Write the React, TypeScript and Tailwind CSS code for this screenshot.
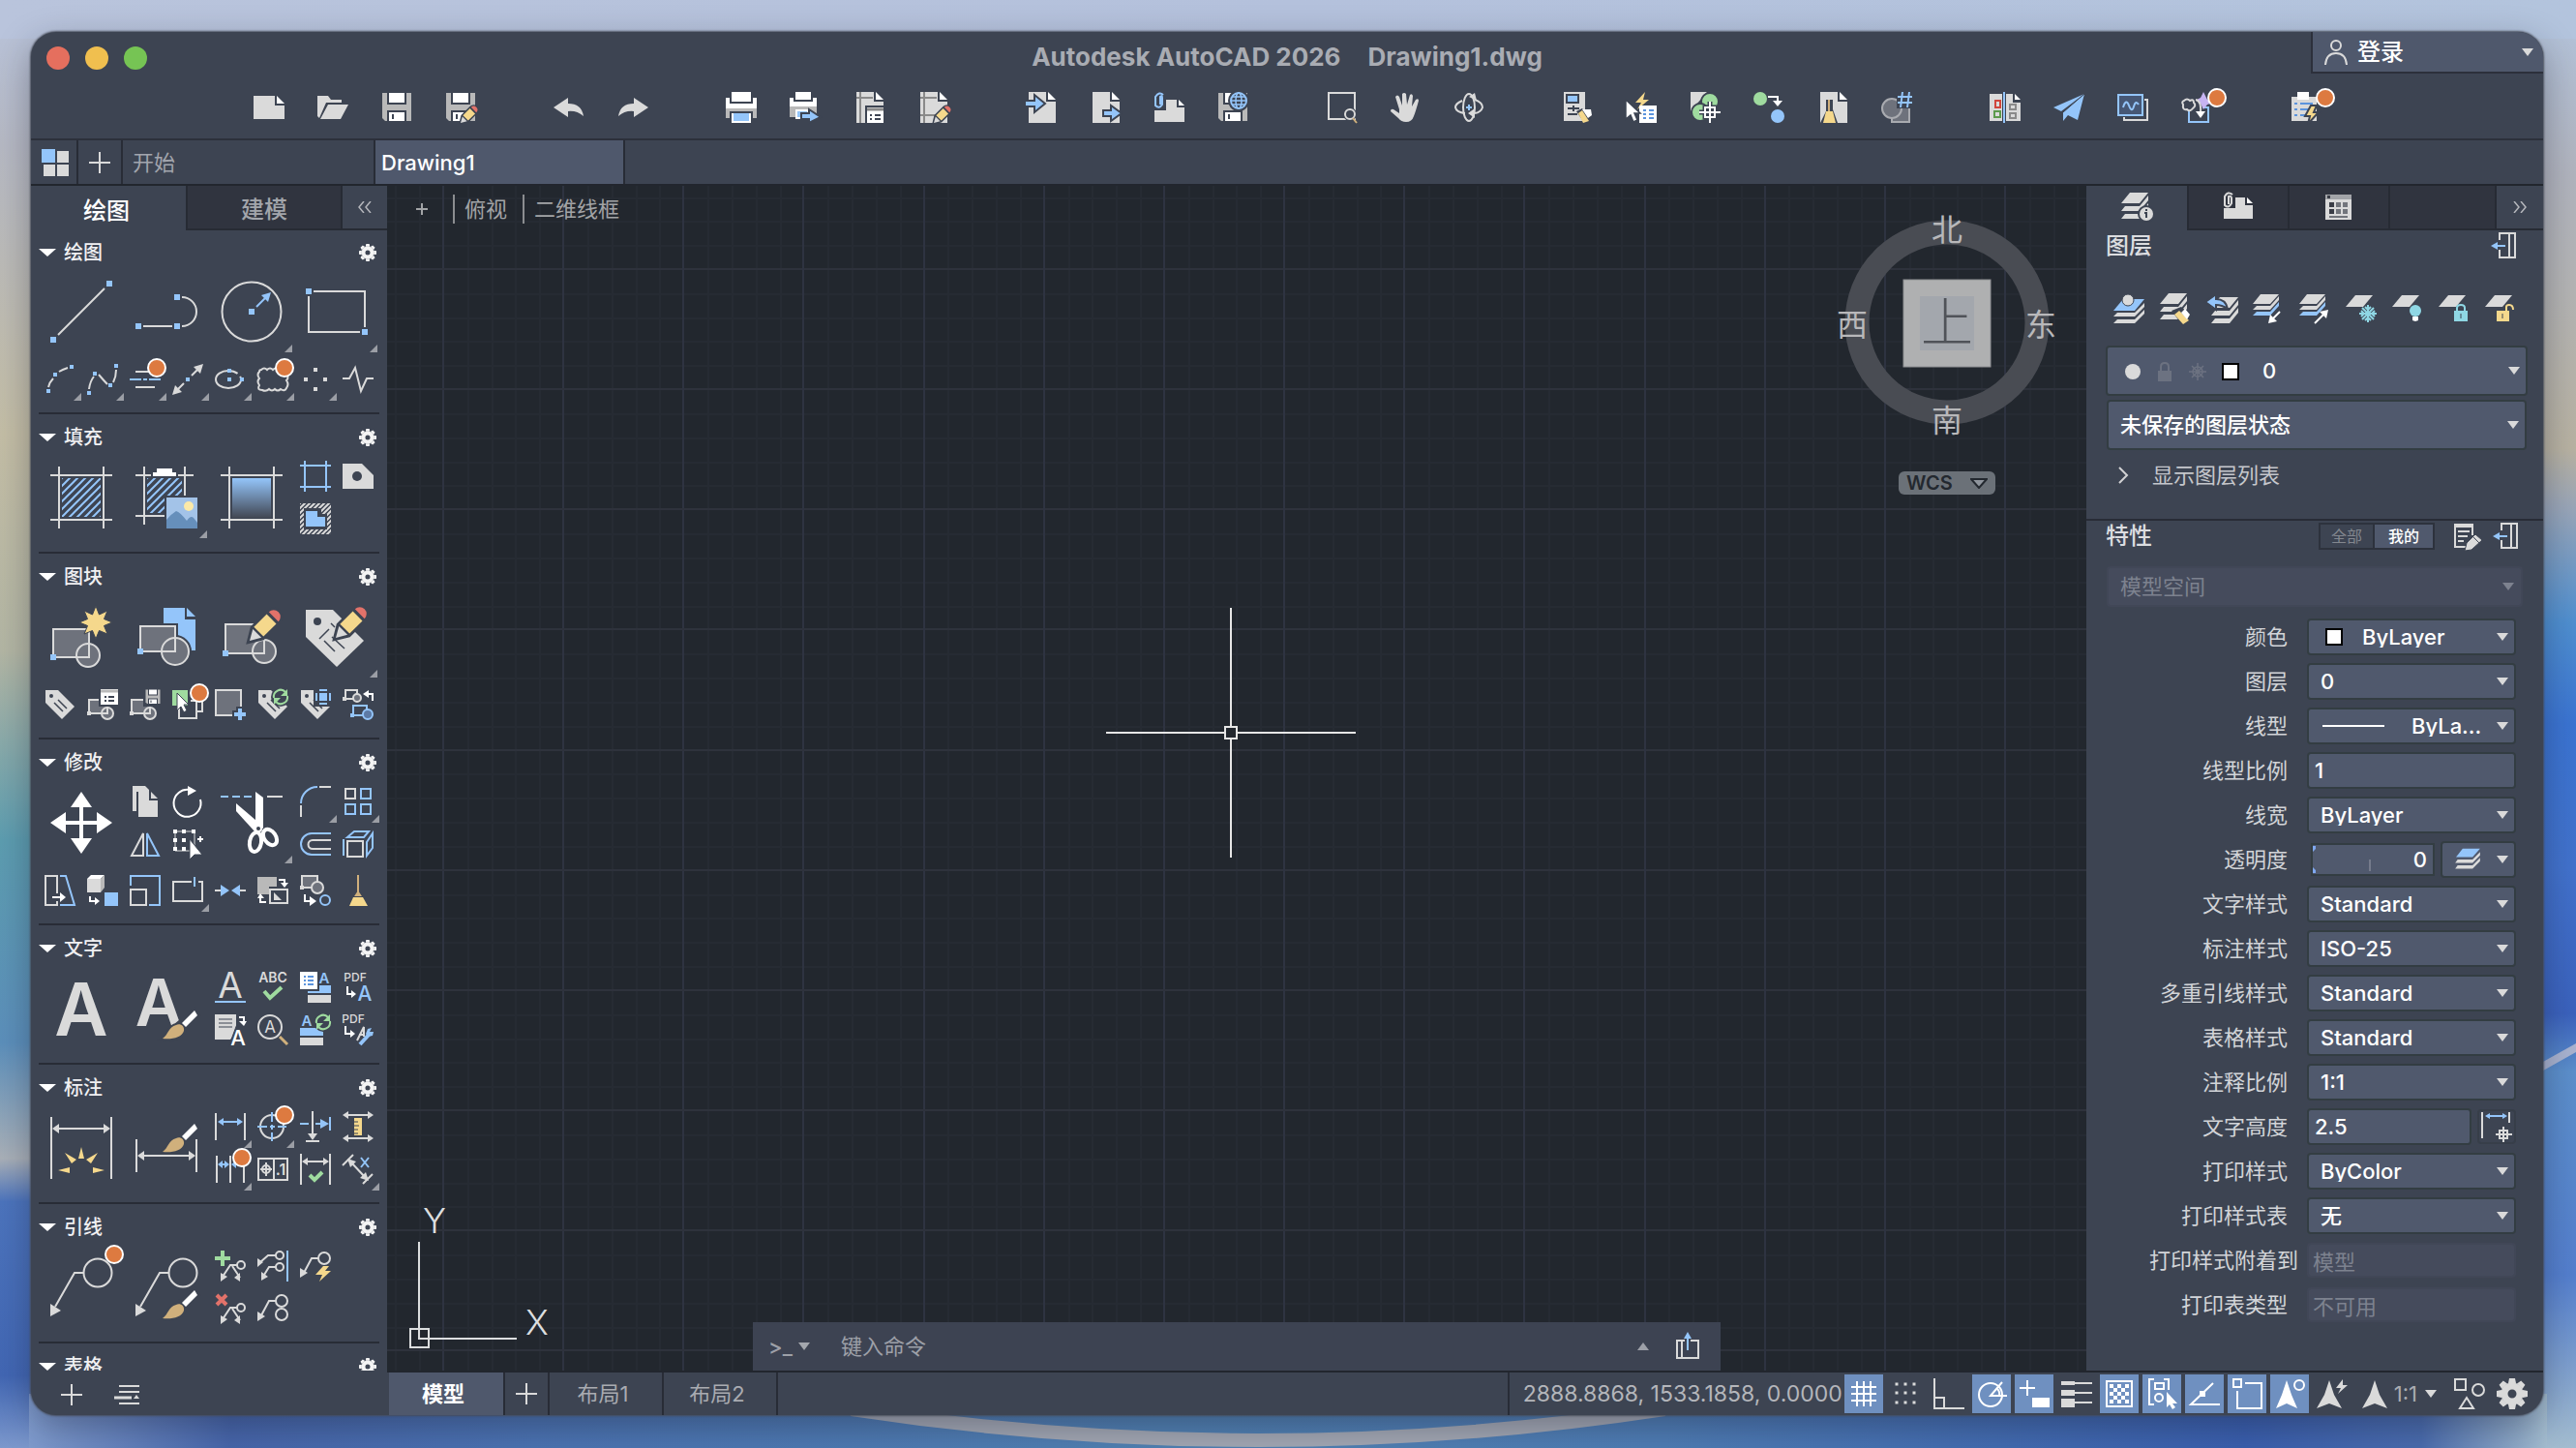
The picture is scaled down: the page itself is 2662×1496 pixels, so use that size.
import type { ReactNode } from 'react'

const G = '#dadada'
const W = '#ffffff'
const B = '#94c5fa'
const Y = '#f5d88c'
const GREEN = '#9fdb9f'
const RED = '#e2726a'
const BG = '#3d4452'
const MID = '#6e727c'
const TAN = '#d0b07c'

function F({ d, c = G }: { d: string; c?: string }) {
  return <path d={d} fill={c} stroke="none" />
}

function S({ d, c = G, w = 2 }: { d: string; c?: string; w?: number }) {
  return <path d={d} fill="none" stroke={c} strokeWidth={w} />
}

function Grips({ at, size = 4, c = B }: { at: number[][]; size?: number; c?: string }) {
  return (
    <>
      {at.map(([x, y]) => (
        <rect key={`${x}-${y}`} x={x - size / 2} y={y - size / 2} width={size} height={size} fill={c} stroke="none" />
      ))}
    </>
  )
}

function Pencil({ x, y, s = 1 }: { x: number; y: number; s?: number }) {
  return (
    <g transform={`translate(${x} ${y}) scale(${s})`}>
      <path d="M0 0L3 -12L18 -27A6 6 0 0 1 27 -18L12 -3Z" fill={BG} stroke={BG} strokeWidth="5" />
      <F d="M0 0L3 -11L11 -3Z" />
      <F d="M4 -13L16 -25L25 -16L13 -4Z" c={Y} />
      <F d="M18 -27A6 6 0 0 1 27 -18Z" c={RED} />
    </g>
  )
}

function Brush({ y = 0 }: { y?: number }) {
  return (
    <g transform={`translate(0 ${y})`}>
      <path d="M28 62C34 58 34 50 42 48L61 32L65 38L51 52C50 60 42 64 28 62Z" fill={BG} stroke={BG} strokeWidth="4" />
      <F d="M28 62C34 58 34 50 42 48C46 46 51 49 50 54C48 61 38 63 28 62Z" c={TAN} />
      <F d="M48 46L61 33L64 38L52 50Z" c={W} />
    </g>
  )
}

function Floppy({ globe }: { globe?: boolean }) {
  return (
    <>
      <F d="M1 1H31V30H4L1 27Z" c="#b9b9b9" />
      <F d="M6 0H26V13H6Z" c={BG} />
      <F d="M8 1H24V11H8Z" c={W} />
      <F d="M6 19H26V31H6Z" c={BG} />
      <F d="M8 21H24V30H8Z" c={W} />
      <F d="M11 23H13V28H11Z" c={BG} />
      {globe && (
        <>
          <circle cx="22" cy="9" r="11" fill={BG} stroke="none" />
          <circle cx="22" cy="9" r="8" stroke={B} />
          <ellipse cx="22" cy="9" rx="3" ry="8" stroke={B} strokeWidth="1.5" />
          <S d="M14 9H30M15 5H29M15 13H29" c={B} w={1.5} />
        </>
      )}
    </>
  )
}

function TinyBlock({ c = G, fill = MID }: { c?: string; fill?: string }) {
  return (
    <>
      <rect x="2" y="11" width="19" height="14" fill={fill} stroke={c} />
      <circle cx="21" cy="25" r="6" fill={fill} stroke={c} />
      <path d="M21 19V25H15" stroke={c} />
      <Grips at={[[2, 25]]} c={c} />
    </>
  )
}

function Tag() {
  return (
    <>
      <F d="M1 1H14L31 18L18 31L1 14Z" />
      <circle cx="7" cy="7" r="2" fill={BG} stroke="none" />
      <S d="M14 11L23 20M10 14L19 23" c={BG} w={1.5} />
    </>
  )
}

function Sync() {
  return (
    <g transform="translate(24 8)">
      <circle r="10" fill={BG} stroke="none" />
      <S d="M-7 1A7 7 0 0 1 5 -5M7 -1A7 7 0 0 1 -5 5" c={GREEN} />
      <F d="M7 -8V-1H0ZM-7 8V1H0Z" c={GREEN} />
    </g>
  )
}

function Hatch({ id, c = B, step = 8 }: { id: string; c?: string; step?: number }) {
  return (
    <defs>
      <pattern id={id} width={step} height={step} patternUnits="userSpaceOnUse">
        <path d={`M0 ${step}L${step} 0M-1 1L1 -1M${step - 1} ${step + 1}L${step + 1} ${step - 1}`} stroke={c} strokeWidth="2" />
      </pattern>
    </defs>
  )
}

function Letter({ x, y, size, c = G, children, weight = 600 }: { x: number; y: number; size: number; c?: string; children: string; weight?: number }) {
  return (
    <text x={x} y={y} fontSize={size} fill={c} stroke="none" textAnchor="middle" fontFamily="Inter, sans-serif" fontWeight={weight}>
      {children}
    </text>
  )
}

const Page = ({ fold = W }: { fold?: string }) => (
  <>
    <F d="M3 0H21V10H31V32H3Z" />
    <F d="M23 0L31 8H23Z" c={fold} />
  </>
)

const SHEETS = 'M9 0H28L19 11H0Z M19 14L28 3V8L19 19H0L4 14Z M19 22L28 11V16L19 27H0L4 22Z'

// 64px tool icons
const large: Record<string, ReactNode> = {
  line: (
    <>
      <S d="M8 56L56 8" />
      <Grips at={[[3, 61], [61, 3]]} size={6} />
    </>
  ),
  polyline: (
    <>
      <S d="M8 47H38M48 17A15 15 0 0 1 48 47" />
      <Grips at={[[3, 47], [43, 47], [43, 17]]} size={6} />
    </>
  ),
  circle: (
    <>
      <circle cx="32" cy="32" r="30.5" />
      <S d="M37 27L47 17" c={B} />
      <F d="M52 12L42 15L49 22Z" c={B} />
      <Grips at={[[32, 32]]} size={6} />
    </>
  ),
  rect: (
    <>
      <S d="M8 11H61V48M56 53H3V16" />
      <Grips at={[[3, 11], [61, 53]]} size={6} />
    </>
  ),
  hatch: (
    <>
      <Hatch id="hatch-a" />
      <S d="M9 0V64M55 0V64M0 9H64M0 55H64" />
      <rect x="12" y="12" width="40" height="40" fill="url(#hatch-a)" stroke="none" />
    </>
  ),
  hatchImage: (
    <>
      <Hatch id="hatch-b" />
      <S d="M9 0V60M51 0V30M0 9H16M44 9H60M0 51H30" />
      <path d="M12 12H48V30H30V48H12Z" fill="url(#hatch-b)" stroke="none" />
      <F d="M18 10V6H22V2H38V6H42V10Z" c={W} />
      <F d="M32 32H64V64H32Z" c="#a3c3e8" />
      <circle cx="55" cy="41" r="5" fill="#fbe9a8" stroke="none" />
      <F d="M32 55Q37 49 42 46Q46 47 53 56Q57 50 60 53L64 58V64H32Z" c="#668fbb" />
    </>
  ),
  gradient: (
    <>
      <defs>
        <linearGradient id="fade" x1="0" y1="0" x2="0" y2="1">
          <stop offset="0" stopColor={B} />
          <stop offset="1" stopColor="#424753" />
        </linearGradient>
      </defs>
      <S d="M9 0V64M55 0V64M0 9H64M0 55H64" />
      <rect x="12" y="12" width="40" height="41" fill="url(#fade)" stroke="none" />
    </>
  ),
  blockNew: (
    <>
      <rect x="3" y="24" width="37" height="29" fill={MID} />
      <circle cx="39" cy="51" r="12" fill={MID} />
      <path d="M40 39V53H27" />
      <Grips at={[[3, 53]]} size={6} />
      <path
        d="M47 0L50.5 9L59 5L55.5 13.500L64 17L55.500 20.500L59 29L50.500 25.500L47 34L43.500 25.500L35 29L38.500 20.500L30 17L38.500 13.500L35 5L43.500 9Z"
        fill={Y}
        stroke={BG}
        strokeWidth="1"
      />
    </>
  ),
  blockInsert: (
    <>
      <F d="M29 2H51V14H62V46H29Z" c={B} />
      <F d="M53 2L62 11H53Z" c={B} />
      <rect x="5" y="21" width="36" height="26" fill={MID} stroke={BG} strokeWidth="6" />
      <circle cx="41" cy="47" r="14" fill={MID} stroke={BG} strokeWidth="6" />
      <rect x="5" y="21" width="36" height="26" fill={MID} />
      <circle cx="41" cy="47" r="14" fill={MID} />
      <path d="M41 33V47H27" />
      <Grips at={[[5, 47]]} size={6} />
    </>
  ),
  blockEdit: (
    <>
      <rect x="5" y="19" width="40" height="30" fill={MID} />
      <circle cx="45" cy="47" r="12" fill={MID} />
      <path d="M45 35V49H33" />
      <Grips at={[[5, 49]]} size={6} />
      <Pencil x={30} y={36} s={1.1} />
    </>
  ),
  tagEdit: (
    <>
      <F d="M0 4H28L60 36L32 63L0 32Z" />
      <circle cx="12" cy="16" r="4" fill={BG} stroke="none" />
      <S d="M14 34L24 24M19 36L30 47M27 32L40 44M26 18L30 22" c={BG} w={1.5} />
      <Pencil x={31} y={33} s={1.1} />
    </>
  ),
  move: (
    <>
      <S d="M32 10V54M10 32H54" c={W} w={4} />
      <F d="M32 0L43 16H21ZM32 64L43 48H21ZM0 32L16 21V43ZM64 32L48 21V43Z" c={W} />
    </>
  ),
  trim: (
    <>
      <S d="M0 5H8M12 5H20M24 5H32" c={B} />
      <S d="M48 5H64" />
      <F d="M36 0L44 6V38L36 34Z" c={W} />
      <F d="M16 12L44 36L36 42L16 20Z" c={W} />
      <circle cx="39" cy="38" r="4" fill={W} stroke="none" />
      <circle cx="39" cy="38" r="2" fill={BG} stroke="none" />
      <ellipse cx="36" cy="52" rx="6" ry="10" stroke={W} strokeWidth="4" transform="rotate(10 36 52)" />
      <ellipse cx="51" cy="47" rx="6" ry="9" stroke={W} strokeWidth="4" transform="rotate(-35 51 47)" />
    </>
  ),
  text: <Letter x={32} y={60} size={76}>A</Letter>,
  textStyle: (
    <>
      <Letter x={24} y={50} size={67}>A</Letter>
      <Brush y={1} />
    </>
  ),
  dim: (
    <>
      <S d="M1 0V64M63 0V64M8 12H56" />
      <F d="M2 12L9 7V17ZM62 12L55 7V17Z" />
      <F d="M32 31L35 43H29ZM15 37L27 44L22 48ZM49 37L37 44L42 48ZM8 55L20 52V58ZM56 55L44 52V58Z" c={Y} />
    </>
  ),
  dimStyle: (
    <>
      <S d="M1 23V57M63 23V57M8 40H56" />
      <F d="M2 40L9 35V45ZM62 40L55 35V45Z" />
      <Brush y={-26} />
    </>
  ),
  leader: (
    <>
      <circle cx="49" cy="17" r="14.500" />
      <S d="M34 17H25L5 52" />
      <F d="M0 62V49L11 56Z" />
    </>
  ),
  leaderStyle: (
    <>
      <circle cx="49" cy="17" r="14.500" />
      <S d="M34 17H25L5 52" />
      <F d="M0 62V49L11 56Z" />
      <Brush y={2} />
    </>
  ),
}

// 32px icons
const small: Record<string, ReactNode> = {
  newFile: (
    <>
      <F d="M0 4H22V14H32V28H0Z" />
      <F d="M24 4L32 12H24Z" c={W} />
    </>
  ),
  open: <F d="M0 4H11L14 8H25V11H9L2 27L0 25ZM11 13H32L24 28H3Z" />,
  save: <Floppy />,
  saveAs: (
    <>
      <Floppy />
      <Pencil x={16} y={32} s={0.6} />
    </>
  ),
  undo: <F d="M0 16L15 6V12Q29 12 31 25Q24 19 15 20V26Z" />,
  redo: <F d="M32 16L17 6V12Q3 12 1 25Q8 19 17 20V26Z" />,
  print: (
    <>
      <F d="M6 0H26V10H6Z" c={W} />
      <F d="M0 6H4V12H28V6H32V18H0Z" c={W} />
      <F d="M0 17H32V27H0Z" c="#b9b9b9" />
      <F d="M4 20H28V32H4Z" c={BG} />
      <F d="M6 22H26V32H6Z" c={W} />
      <F d="M8 22H24V30H8Z" c={B} />
    </>
  ),
  printOut: (
    <>
      <F d="M6 0H22V8H6Z" c={W} />
      <F d="M0 6H4V10H24V6H28V16H0Z" c={W} />
      <F d="M0 15H28V26H0Z" c="#b9b9b9" />
      <F d="M6 18H22V28H6Z" c={W} />
      <F d="M8 20H18V26H8Z" c={B} />
      <path d="M12 22H20V18L32 26L20 32V28H12Z" fill={B} stroke={BG} />
    </>
  ),
  plotSettings: (
    <>
      <Page />
      <S d="M3 6H20M7 0V32" c="#8a8a8a" />
      <F d="M12 14H32V32H12Z" c={BG} />
      <F d="M14 16H31V32H14Z" c={W} />
      <S d="M17 24H19M22 24H28M17 28H19M22 28H28" c={BG} />
      <S d="M14 18H31" c="#8a8a8a" w={3} />
    </>
  ),
  plotEdit: (
    <>
      <Page />
      <S d="M3 6H20M7 0V32M3 24H24" c="#8a8a8a" />
      <Pencil x={17} y={32} s={0.6} />
    </>
  ),
  importFile: (
    <>
      <Page />
      <path d="M-1 9H9V3L20 12L9 21V15H-1Z" fill={B} stroke={BG} />
    </>
  ),
  exportFile: (
    <>
      <Page />
      <path d="M14 19H22V14L33 22L22 30V25H14Z" fill={B} stroke={BG} />
    </>
  ),
  attach: (
    <>
      <F d="M1 8H24V16H32V31H1Z" />
      <F d="M26 8L32 14H26Z" c={W} />
      <F d="M0 0H13V19H0Z" c={BG} />
      <S d="M7 13V5Q9 3 9 6V13Q6 18 2 14V5Q6 -1 10 3" c={B} />
    </>
  ),
  saveWeb: <Floppy globe />,
  zoomWindow: (
    <>
      <rect x="3" y="1" width="27" height="27" />
      <circle cx="25" cy="23" r="7" fill={BG} stroke="none" />
      <circle cx="25" cy="23" r="5" />
      <S d="M28 27L32 32" c={TAN} />
    </>
  ),
  pan: (
    <F d="M10 18L6 5Q8 2 10 5L13 14L13 2Q15 0 17 2L18 13L21 3Q23 1 24 4L23 15L27 8Q30 6 30 9Q27 20 25 25Q23 31 17 31Q12 31 9 27L1 20Q1 17 4 18L10 22Z" />
  ),
  orbit: (
    <>
      <ellipse cx="16" cy="16" rx="6" ry="14" />
      <S d="M9 9Q2 12 2 16Q3 21 12 22M22 8Q30 11 30 16Q28 22 20 22" />
      <F d="M22 17V27L15 22ZM16 5L22 1L24 9Z" />
      <S d="M16 13V19M13 16H19" c={B} />
    </>
  ),
  calcBrush: (
    <>
      <F d="M2 0H24V30H2Z" />
      <F d="M4 2H18V12H4Z" c={BG} />
      <F d="M6 4H16V10H6Z" c={B} />
      <S d="M6 17H18M12 14V20M6 23H16" c={BG} />
      <F d="M15 20L21 17L31 30L24 33Z" c={BG} />
      <F d="M17 22L21 19L28 30L22 32Z" c={Y} />
      <F d="M21 18L30 18L31 24L27 27Z" c={W} />
    </>
  ),
  quickSelect: (
    <>
      <F d="M20 0L10 11H16L12 18L24 8H18Z" c={Y} />
      <F d="M14 14H32V32H14Z" c={W} />
      <S d="M18 19H21M24 19H29M18 23H21M24 23H29M18 27H21M24 27H29" c="#5c94dd" />
      <path d="M0 8V28L5 24L8 31L12 29L9 22H15Z" fill={W} stroke={BG} strokeWidth="1.5" />
    </>
  ),
  match: (
    <>
      <F d="M1 0H18L1 20Z" />
      <circle cx="21" cy="10" r="9" fill={GREEN} stroke={BG} />
      <circle cx="11" cy="21" r="9" fill={GREEN} stroke={BG} />
      <S d="M21 10V32M10 21H32M16 16H26V26H16Z" c={BG} w={5} />
      <S d="M21 10V32M10 21H32M16 16H26V26H16Z" c={W} />
    </>
  ),
  convert: (
    <>
      <circle cx="7" cy="7" r="7" fill={GREEN} stroke="none" />
      <S d="M15 5H25V9" c={W} />
      <F d="M20 9H30L25 15Z" c={W} />
      <circle cx="25" cy="25" r="7" fill={B} stroke="none" />
    </>
  ),
  purge: (
    <>
      <Page />
      <F d="M9 8H16V18L21 32H3L9 20Z" c={BG} />
      <S d="M12 8V20" c={TAN} />
      <F d="M9 20H16L19 32H6Z" c={Y} />
    </>
  ),
  count: (
    <>
      <rect x="11" y="16" width="18" height="15" fill={MID} stroke="#a9abb0" />
      <circle cx="11" cy="17" r="10" fill={MID} stroke="#a9abb0" />
      <F d="M16 0H33V17H16Z" c={BG} />
      <S d="M22 0L20 16M29 0L27 16M17 5H32M17 11H32" c={B} />
    </>
  ),
  compare: (
    <>
      <F d="M0 2H13V30H0Z" />
      <F d="M17 2H24V11H32V30H17Z" />
      <F d="M26 2L32 8H26Z" c={W} />
      <S d="M6 9H11V16H6Z" c="#d0453c" />
      <S d="M5 20H11V26H5Z" c="#5c9a4c" />
      <S d="M21 13H27V18H21ZM21 22H27V27H21Z" c="#8a8a8a" />
      <S d="M15 0V32" c={B} />
    </>
  ),
  send: (
    <>
      <F d="M32 2L0 16L8 20Z" c={B} />
      <F d="M32 2L10 21V30L15 24L25 29Z" c={B} />
      <S d="M32 2L10 21" c={BG} w={1} />
    </>
  ),
  trace: (
    <>
      <S d="M28 8H31V29H7V26" />
      <rect x="1" y="3" width="25" height="21" stroke={B} fill="#465775" />
      <S d="M6 16Q9 6 12 14T17 15T22 13" c={B} />
    </>
  ),
  assist: (
    <>
      <S d="M8 17V31H28V16H22" c={B} />
      <F d="M23 0L27 8L33 11L27 13L23 18L20 12L16 8L20 6Z" c="#c7b4f2" />
      <path d="M2 13Q0 10 3 9Q6 6 9 9Q13 7 13 11Q16 14 12 17Q9 21 6 18Q1 19 2 13Z" fill={BG} />
      <S d="M15 8Q21 9 20 22" />
      <F d="M15 20H25L20 27Z" c={W} />
    </>
  ),
  clipboard: (
    <>
      <F d="M2 5H28V30H2Z" />
      <F d="M8 0H20V8H8Z" c={W} />
      <S d="M5 12H8M11 12H24M5 18H8M11 18H20M5 24H8M11 24H16" c="#5c94dd" />
      <path d="M22 14L16 25H21L19 33L30 21H25L28 14Z" fill={Y} stroke={BG} />
    </>
  ),
  arc: (
    <>
      <S d="M24 4Q18 6 15 8M9 15Q5 19 4 24" />
      <Grips at={[[28, 3], [11, 11], [4, 28]]} />
    </>
  ),
  spline: (
    <>
      <S d="M2 26Q3 18 7 13M12 11Q18 18 21 21M27 19Q30 13 30 6" />
      <Grips at={[[2, 30], [8, 10], [24, 22], [30, 2]]} />
    </>
  ),
  multiline: (
    <>
      <S d="M6 8H20M6 24H26" />
      <S d="M0 16H12M14 16H18M20 16H32" c={B} />
    </>
  ),
  ray: (
    <>
      <S d="M5 27L12 20M20 12L27 5" />
      <F d="M32 0L22 3L29 10ZM0 32L3 22L10 29Z" />
      <Grips at={[[16, 16]]} />
    </>
  ),
  ellipse: (
    <>
      <ellipse cx="14" cy="16" rx="13" ry="9" strokeDasharray="62 4" />
      <Grips at={[[15, 7], [15, 16], [28, 16]]} />
    </>
  ),
  cloud: (
    <path d="M4 6Q7 3 10 6Q13 3 16 6Q19 3 22 6Q25 3 28 6Q32 7 30 11Q33 14 30 17Q33 21 30 25Q28 29 24 26Q21 29 18 26Q15 29 12 26Q9 29 5 27Q-1 27 2 22Q-1 18 2 15Q-1 11 2 8Q2 6 4 6Z" />
  ),
  points: <Grips at={[[16, 6], [6, 16], [26, 16], [16, 26]]} c={G} />,
  breakLine: <S d="M0 15H7L13 4L19 28L25 15H32" />,
  boundary: <S d="M5 0V32M27 0V32M0 5H32M0 27H32" c={B} />,
  wipeout: (
    <>
      <F d="M0 3H20L32 15V29H0Z" />
      <circle cx="15" cy="16" r="5" fill={BG} stroke="none" />
    </>
  ),
  region: (
    <>
      <Hatch id="hatch-c" c={G} step={5} />
      <rect width="32" height="32" fill="url(#hatch-c)" stroke="none" />
      <F d="M4 5H22V11H28V27H4Z" c={BG} />
      <F d="M6 8H18V14H26V24H6Z" c={B} />
    </>
  ),
  tag: <Tag />,
  blockAttr: (
    <>
      <TinyBlock />
      <F d="M12 -2H34V18H12Z" c={BG} />
      <F d="M14 0H32V16H14Z" c={W} />
      <S d="M14 2H32" c="#b9b9b9" w={3} />
      <S d="M18 8H20M22 8H28M18 12H20M22 12H28" c={BG} />
    </>
  ),
  blockSave: (
    <>
      <TinyBlock />
      <F d="M14 -2H34V18H14Z" c={BG} />
      <g transform="translate(16 0) scale(.5)">
        <Floppy />
      </g>
    </>
  ),
  blockDynamic: (
    <>
      <S d="M26 12H31V23H26" />
      <path d="M7 14V30H25V12H19" />
      <F d="M0 1H16V17H0Z" c={GREEN} />
      <path d="M5 4V22L9 18L12 24L15 22L12 16H17Z" fill={W} stroke={BG} strokeWidth="1" />
    </>
  ),
  rectAdd: (
    <>
      <rect x="1" y="1" width="26" height="26" fill={MID} />
      <S d="M26 18V34M18 26H34" c={BG} w={8} />
      <S d="M26 20V32M20 26H32" c={B} w={4} />
    </>
  ),
  tagSync: (
    <>
      <Tag />
      <Sync />
    </>
  ),
  tagSelect: (
    <>
      <Tag />
      <F d="M14 -2H34V18H14Z" c={BG} />
      <F d="M20 4H28V12H20ZM20 0H28V2H20ZM20 14H28V16H20ZM16 4H18V12H16ZM30 4H32V12H30Z" c={B} />
    </>
  ),
  blockReplace: (
    <>
      <rect x="3" y="1" width="12" height="9" />
      <circle cx="15" cy="9" r="4" fill={MID} />
      <Grips at={[[2, 10]]} c={G} />
      <S d="M31 12V5H25" c={W} />
      <F d="M21 5L27 1V9Z" c={W} />
      <rect x="11" y="17" width="14" height="10" stroke={B} />
      <circle cx="26" cy="26" r="5" fill="#5d7aa5" stroke={B} />
      <Grips at={[[10, 27]]} />
    </>
  ),
  copy: (
    <>
      <F d="M3 0H16L20 4V6H7V26H3Z" />
      <F d="M9 6H20V15H29V32H9Z" />
      <F d="M22 6L29 13H22Z" />
    </>
  ),
  rotate: (
    <>
      <S d="M18 4A14 14 0 1 0 29 14" c={W} />
      <F d="M16 0L25 5L16 10Z" c={W} />
    </>
  ),
  mirror: (
    <>
      <path d="M2 28H14V5Z" />
      <path d="M18 5V28H30Z" stroke={B} />
    </>
  ),
  gripEdit: (
    <>
      <S d="M3 3H23V23H3Z" w={1} />
      <Grips at={[[3, 3], [12, 3], [22, 3], [3, 12], [12, 12], [3, 21], [12, 21]]} c={W} />
      <S d="M29 8V14M26 11H32" c={W} />
      <path d="M18 11V32L23 27H31Z" fill={W} stroke={BG} strokeWidth="1" />
    </>
  ),
  fillet: (
    <>
      <S d="M1 18A17 17 0 0 1 18 1" c={B} />
      <S d="M20 1H32M1 20V32" />
    </>
  ),
  array: (
    <>
      <rect x="3" y="3" width="10" height="10" />
      <S d="M19 3H29V13H19ZM3 19H13V29H3ZM19 19H29V29H19Z" c={B} />
    </>
  ),
  offset: (
    <>
      <S d="M32 5H12A11 11 0 0 0 12 27H32" c={B} />
      <S d="M32 12H13A4 4 0 0 0 13 21H32" />
    </>
  ),
  solid: (
    <>
      <rect x="5" y="13" width="16" height="16" />
      <S d="M1 11V28M5 9L12 3H27L22 9ZM25 14L31 5V20L25 28Z" c={B} />
    </>
  ),
  stretch: (
    <>
      <S d="M13 19V1H1V31H13V27" />
      <S d="M16 1H22L31 31H16" c={B} />
      <S d="M8 23H17" c={W} />
      <F d="M16 18L22 23L16 28Z" c={W} />
    </>
  ),
  cubeCopy: (
    <>
      <F d="M0 4L4 0H18L14 4Z" c={W} />
      <F d="M0 4H14V18H0Z" />
      <F d="M14 4L18 0V13L14 18Z" c="#b9b9b9" />
      <F d="M18 18H32V32H18Z" c={B} />
      <S d="M3 22V27H8" c={W} />
      <F d="M8 23L13 27L8 31Z" c={W} />
    </>
  ),
  scale: (
    <>
      <S d="M1 11V1H31V31H20" c={B} />
      <rect x="1" y="15" width="16" height="16" />
    </>
  ),
  breakAt: (
    <>
      <S d="M20 7H1V27H31V7H27" />
      <S d="M23 2V12" c={B} />
    </>
  ),
  join: (
    <>
      <S d="M0 16H8M24 16H32" />
      <F d="M6 10L15 16L6 22ZM26 10L17 16L26 22Z" c={B} />
    </>
  ),
  overlap: (
    <>
      <F d="M0 2H20V12H12V20H0Z" c="#b9b9b9" />
      <rect x="13" y="15" width="18" height="14" />
      <F d="M17 18L25 26H17Z" />
      <S d="M22 5H28V9M3 23V28H9" c={W} />
      <F d="M24 8H32L28 13ZM0 24H7L3 19Z" c={W} />
    </>
  ),
  blockCopy: (
    <>
      <rect x="2" y="1" width="16" height="12" fill={MID} />
      <circle cx="18" cy="13" r="6" fill={MID} />
      <Grips at={[[2, 13]]} c={G} />
      <circle cx="26" cy="26" r="5" stroke={B} />
      <S d="M5 20V27H12" c={W} />
      <F d="M10 22L17 27L10 32Z" c={W} />
    </>
  ),
  broom: (
    <>
      <S d="M16 0V18" c={TAN} />
      <F d="M16 16L20 22H12Z" c={TAN} />
      <F d="M11 23H21L26 32H7Z" c={Y} />
    </>
  ),
  textSingle: (
    <>
      <Letter x={16} y={27} size={37} weight={400}>A</Letter>
      <S d="M0 31H32" c={B} />
    </>
  ),
  spell: (
    <>
      <Letter x={16} y={11} size={14}>ABC</Letter>
      <S d="M7 20L13 27L25 16" c={GREEN} w={4} />
    </>
  ),
  textField: (
    <>
      <F d="M0 0H18V18H0Z" c={W} />
      <S d="M4 5H6M8 5H14M4 9H6M8 9H14M4 13H6M8 13H14" c="#5c94dd" />
      <Letter x={25} y={12} size={15} c={B}>A</Letter>
      <F d="M20 14H32V22H8V20H20Z" c={B} />
      <F d="M8 24H32V32H8Z" />
    </>
  ),
  pdfText: (
    <>
      <Letter x={13} y={10} size={12} weight={500}>PDF</Letter>
      <S d="M5 15V23H9" c={W} />
      <F d="M9 19L14 23L9 27Z" c={W} />
      <Letter x={23} y={30} size={21} c={B} weight={500}>A</Letter>
    </>
  ),
  textConvert: (
    <>
      <F d="M0 0H22V20L16 26H0Z" />
      <S d="M4 5H18M4 9H18M4 13H18" c={BG} w={1} />
      <S d="M25 3H30V8" c={W} />
      <F d="M25 7H33L30 12Z" c={W} />
      <path d="M14 34L23 10L32 34Z" fill={BG} stroke={BG} strokeWidth="1" />
      <Letter x={24} y={32} size={22} c={W} weight={500}>A</Letter>
    </>
  ),
  findText: (
    <>
      <circle cx="13" cy="13" r="12" />
      <Letter x={13} y={19} size={17} weight={400}>A</Letter>
      <S d="M23 23L31 31" c={TAN} w={3} />
    </>
  ),
  textUpdate: (
    <>
      <Letter x={7} y={12} size={15} c={B}>A</Letter>
      <F d="M0 14H20L24 18V22H0Z" c={B} />
      <F d="M0 24H24V32H0Z" />
      <Sync />
    </>
  ),
  pdfSettings: (
    <>
      <Letter x={11} y={9} size={12} weight={500}>PDF</Letter>
      <S d="M3 12V20H8" c={W} />
      <F d="M8 16L13 20L8 24Z" c={W} />
      <S d="M15 27L22 13V23M17 21H22" />
      <S d="M18 31L28 20" c={B} w={4} />
      <F d="M24 20L26 15L30 14L28 18L32 18L31 22L26 23Z" c={B} />
    </>
  ),
  dimLinear: (
    <>
      <S d="M1 2V30M31 2V30" />
      <S d="M6 11H26" c={B} />
      <F d="M3 11L9 7V15ZM29 11L23 7V15Z" c={B} />
    </>
  ),
  centerMark: (
    <>
      <circle cx="15" cy="16" r="12" />
      <S d="M15 1V11M15 14V19M15 22V31M0 16H10M13 16H18M21 16H30" c={B} />
    </>
  ),
  ordinate: (
    <>
      <S d="M13 0V23M6 31H20" />
      <F d="M8 23H18L13 30Z" />
      <S d="M0 13H9M16 13H22M31 6V20" c={B} />
      <F d="M21 8L30 13L21 18Z" c={B} />
    </>
  ),
  dimSpace: (
    <>
      <S d="M4 4H28M4 28H28" />
      <F d="M0 4L6 0V8ZM32 4L26 0V8ZM0 28L6 24V32ZM32 28L26 24V32Z" />
      <F d="M12 7H20V25H12Z" c={Y} />
      <S d="M12 11H16M12 15H17M12 19H16M12 23H16" c={BG} w={1} />
    </>
  ),
  dimContinue: (
    <>
      <S d="M2 2V30M16 2V30M30 10V30" />
      <S d="M6 11H12M19 11H24" c={B} />
      <F d="M3 11L8 7V15ZM15 11L10 7V15ZM17 11L22 7V15Z" c={B} />
    </>
  ),
  tolerance: (
    <>
      <rect x="1" y="5" width="30" height="22" />
      <S d="M17 5V27M3 16H15M9 9V23" />
      <circle cx="9" cy="16" r="4" />
      <Letter x={24} y={22} size={16}>.1</Letter>
    </>
  ),
  dimInspect: (
    <>
      <S d="M1 0V32M31 0V32M6 8H26" />
      <F d="M2 8L8 4V12ZM30 8L24 4V12Z" />
      <S d="M10 22L15 27L23 19" c={GREEN} w={4} />
    </>
  ),
  dimAligned: (
    <>
      <S d="M0 12L11 1M21 31L31 21M9 9L23 24" />
      <F d="M5 5L14 8L8 14ZM27 28L18 25L24 19Z" />
      <S d="M19 4L27 14M27 4L19 14" c={B} />
    </>
  ),
  leaderAdd: (
    <>
      <S d="M8 0V16M0 8H16" c={GREEN} w={4} />
      <circle cx="27" cy="15" r="4" />
      <S d="M23 15H16L8 27M18 16L26 28" />
      <F d="M6 32V23L13 27ZM26 32V23L20 28Z" />
    </>
  ),
  leaderAlign: (
    <>
      <circle cx="23" cy="5" r="4" />
      <circle cx="23" cy="17" r="4" />
      <S d="M19 5H11L3 12M19 17H12L7 25" />
      <F d="M0 17V8L6 12ZM4 31V22L11 27Z" />
      <S d="M31 0V32" c={B} />
    </>
  ),
  leaderQuick: (
    <>
      <circle cx="25" cy="8" r="6" />
      <S d="M19 8H12L4 23" />
      <F d="M0 28V18L8 23Z" />
      <F d="M24 16L16 25H23L20 32L32 21H26L30 16Z" c={Y} />
    </>
  ),
  leaderRemove: (
    <>
      <S d="M2 2L12 12M12 2L2 12" c={RED} w={4} />
      <circle cx="27" cy="15" r="4" />
      <S d="M23 15H16L8 27M18 16L26 28" />
      <F d="M6 32V23L13 27ZM26 32V23L20 28Z" />
    </>
  ),
  leaderCollect: (
    <>
      <circle cx="25" cy="8" r="6" />
      <circle cx="25" cy="22" r="6" />
      <S d="M19 8H12L4 23" />
      <F d="M0 29V19L8 24Z" />
    </>
  ),
  layersInfo: (
    <>
      <F d={SHEETS} />
      <circle cx="26" cy="22" r="9" fill={BG} stroke="none" />
      <circle cx="26" cy="22" r="7" fill={G} stroke="none" />
      <S d="M24 21H26V26M26 17V19" c={BG} />
    </>
  ),
  clip: (
    <>
      <F d="M1 6H23V14H31V28H1Z" />
      <F d="M25 6L31 12H25Z" c={W} />
      <F d="M-1 0H13V17H-1Z" c="#30343f" />
      <F d="M1 18H13V24H1Z" />
      <S d="M6 13V5Q9 4 9 7V12Q6 18 2 14V5Q5 -1 10 3" />
    </>
  ),
  calcPanel: (
    <>
      <F d="M2 3H29V29H2Z" />
      <F d="M2 3H29V8H2Z" c="#a2a4a8" />
      <F d="M4 4H7V7H4ZM6 11H11V16H6ZM6 18H11V23H6Z" c="#3a3d46" />
      <F d="M13 11H18V16H13ZM20 11H25V16H20ZM13 18H18V23H13ZM20 18H25V23H20ZM6 25H25V27H6Z" c="#72757c" />
    </>
  ),
  dock: (
    <>
      <S d="M9 10V3H25V28H9V20M19 3V28" />
      <S d="M5 16H15" c={B} />
      <F d="M0 16L7 12V20Z" c={B} />
    </>
  ),
  layerWalk: (
    <>
      <F d="M10 6H32L22 18H0Z" c={B} />
      <circle cx="15" cy="7" r="6" fill={G} stroke={BG} strokeWidth="1" />
      <F d="M2 24H0L4 20H22L32 10V14L22 24ZM0 31L4 27H22L32 17V21L22 31Z" />
    </>
  ),
  layerMatch: (
    <>
      <F d={SHEETS} />
      <F d="M12 18L22 14L34 24L24 34Z" c={BG} />
      <F d="M15 22L20 18L30 28L24 32Z" c={Y} />
      <F d="M22 20L26 16L31 22L28 27Z" c={W} />
    </>
  ),
  layerPrev: (
    <>
      <g transform="translate(5 4)">
        <F d={SHEETS} />
      </g>
      <path d="M-1 9L10 1V6Q20 6 22 16Q16 12 10 12V17Z" fill={B} stroke={BG} />
    </>
  ),
  layerIso: (
    <>
      <F d="M8 1H27L18 11H0Z M18 13L27 3V7L18 17H0L4 13Z" />
      <F d="M18 19L27 9V13L18 23H0L4 19Z" c={B} />
      <S d="M28 19L20 27" c={W} />
      <F d="M16 31L18 22L25 29Z" c={W} />
    </>
  ),
  layerUniso: (
    <>
      <F d="M8 1H27L18 11H0Z M18 13L27 3V7L18 17H0L4 13Z" />
      <F d="M18 19L27 9V13L18 23H0L4 19Z" c={B} />
      <S d="M16 31L25 22" c={W} />
      <F d="M30 17L28 26L21 19Z" c={W} />
    </>
  ),
  layerFreeze: (
    <>
      <F d="M10 2H28L18 14H0Z" />
      <S d="M23 12V30M14 21H32M17 15L29 27M29 15L17 27M20 14L23 17L26 14M20 28L23 25L26 28M16 18L19 21L16 24M30 18L27 21L30 24" c="#8fd7e4" />
    </>
  ),
  layerOff: (
    <>
      <F d="M10 2H28L18 14H0Z" />
      <circle cx="24" cy="18" r="6" fill="#8fd7e4" stroke="none" />
      <F d="M21 24H27V28L24 29L21 28Z" c={W} />
    </>
  ),
  layerLock: (
    <>
      <F d="M10 2H28L18 14H0Z" />
      <S d="M19 19V15Q19 12 23 12Q27 12 27 15V19" c="#8fd7e4" />
      <F d="M16 18H30V29H16Z" c="#8fd7e4" />
      <S d="M23 21V26" c={BG} w={1} />
    </>
  ),
  layerUnlock: (
    <>
      <F d="M10 2H28L18 14H0Z" />
      <S d="M22 19V14Q22 12 25 12Q29 12 29 17" c={Y} />
      <F d="M12 18H25V29H12Z" c={Y} />
      <S d="M18 21V26" c={BG} w={1} />
    </>
  ),
  noteEdit: (
    <>
      <F d="M2 3H22V7H2Z" />
      <S d="M14 27H3V5H21V15M6 11H18M6 16H16M6 21H12" />
      <path d="M13 31L15 23L24 14L31 20L20 30Z" fill={G} stroke={BG} strokeWidth="1" />
      <S d="M21 16L28 23" c={BG} w={1} />
    </>
  ),
  pickHeight: (
    <>
      <S d="M1 1V28M29 1V12" />
      <S d="M6 5H24" c={B} />
      <F d="M4 5L9 2V8ZM27 5L22 2V8Z" c={B} />
      <S d="M23 16V32M15 24H32M19 20H27V28H19Z" />
    </>
  ),
  share: (
    <>
      <S d="M13 10H5V28H27V10H19M10 10V28" />
      <S d="M16 6V20" c={B} />
      <F d="M16 1L20 8H12Z" c={B} />
    </>
  ),
  menuList: (
    <>
      <S d="M6 7H27M6 13H27M6 25H27" />
      <S d="M1 19H19" w={3} />
      <F d="M21 20L24 16L27 20Z" />
    </>
  ),
  grid: <S d="M9 3V29M16 3V29M23 3V29M3 9H29M3 16H29M3 23H29" c={W} />,
  snap: (
    <Grips at={[[6, 6], [15, 6], [24, 6], [6, 15], [15, 15], [24, 15], [6, 25], [15, 25], [24, 25]]} size={3} c={G} />
  ),
  ortho: <S d="M1 0V31H32M1 20H11V31" />,
  polar: (
    <>
      <circle cx="15" cy="17" r="12" stroke={W} />
      <S d="M27 4L15 18H32" c={W} />
      <S d="M22 11Q25 14 24 18" c={W} />
    </>
  ),
  dynInput: (
    <>
      <S d="M9 2V18M1 10H17" c={W} />
      <F d="M14 20H32V30H14Z" c={W} />
    </>
  ),
  lineweight: (
    <>
      <S d="M0 5H32M12 15H32M12 25H32" />
      <F d="M0 3H14V7H0ZM0 12H14V18H0ZM0 21H14V30H0Z" />
    </>
  ),
  transparency: (
    <>
      <rect x="3" y="3" width="26" height="26" stroke={W} />
      <Grips
        at={[[8, 8], [16, 8], [24, 8], [12, 12], [20, 12], [8, 16], [16, 16], [24, 16], [12, 20], [20, 20], [8, 24], [16, 24], [24, 24]]}
        c={W}
      />
    </>
  ),
  cycle: (
    <>
      <S d="M8 1H3V27H8M18 1H23V12" c={W} />
      <rect x="9" y="5" width="9" height="6" stroke={W} />
      <circle cx="13" cy="20" r="4" stroke={W} />
      <F d="M21 14V30L24 27L27 32L30 30L27 26H32Z" c={W} />
    </>
  ),
  osnapTrack: (
    <>
      <S d="M25 5L2 27H32" c={W} />
      <Grips at={[[14, 16]]} size={6} c={W} />
    </>
  ),
  osnap: (
    <>
      <rect x="2" y="1" width="8" height="8" stroke={W} />
      <S d="M14 5H31V31H6V13" c={W} />
    </>
  ),
  annoVisible: (
    <>
      <F d="M13 2L18 17L24 31L13 26L2 31L8 17Z" c={W} />
      <circle cx="26" cy="7" r="5" stroke={W} />
    </>
  ),
  annoAuto: (
    <>
      <F d="M13 2L18 17L26 31L13 26L0 31L8 17Z" />
      <F d="M27 1L20 10H25L22 16L32 7H27Z" />
    </>
  ),
  annoScale: <F d="M16 2L21 17L29 31L16 26L3 31L11 17Z" />,
  shapes: (
    <>
      <rect x="1" y="1" width="11" height="11" />
      <circle cx="25" cy="12" r="6" />
      <path d="M13 20L20 31H6Z" />
    </>
  ),
}

function Icon({ name, big }: { name: string; big?: boolean }) {
  return (
    <svg
      viewBox={big ? '0 0 64 64' : '0 0 32 32'}
      className={big ? 'size-16 overflow-visible' : 'size-8 overflow-visible'}
      fill="none"
      stroke={G}
      strokeWidth="2"
      aria-hidden="true"
    >
      {big ? large[name] : small[name]}
    </svg>
  )
}

function Gear({ className }: { className: string }) {
  return (
    <svg viewBox="0 0 32 32" className={className} aria-hidden="true">
      <circle cx="16" cy="16" r="8" fill="none" stroke="currentColor" strokeWidth="7" />
      {[0, 45, 90, 135].map((a) => (
        <path key={a} d="M13 0H19L20 5H12ZM13 32H19L20 27H12Z" fill="currentColor" transform={`rotate(${a} 16 16)`} />
      ))}
    </svg>
  )
}

function Caret({ className = 'h-2 w-3 text-[#dadada]' }: { className?: string }) {
  return (
    <svg viewBox="0 0 12 8" className={className} preserveAspectRatio="none" aria-hidden="true">
      <path d="M0 0H12L6 8Z" fill="currentColor" />
    </svg>
  )
}

function Plus() {
  return (
    <svg viewBox="0 0 22 22" className="size-[22px]" aria-hidden="true">
      <path d="M11 0V22M0 11H22" stroke={G} strokeWidth="2" />
    </svg>
  )
}

const Badge = ({ className }: { className: string }) => (
  <span className={`absolute size-5 rounded-full border-2 border-white bg-[#dd7a40] ${className}`} />
)

type Tool = { icon: string; label: string; big?: boolean; fly?: boolean; badge?: boolean }

const t = (icon: string, label: string, flags = ''): Tool => ({
  icon,
  label,
  big: flags.includes('L'),
  fly: flags.includes('f'),
  badge: flags.includes('n'),
})

type Section = { title: string; rows: Tool[][] }

const sections: Section[] = [
  {
    title: '绘图',
    rows: [
      [t('line', '直线', 'L'), t('polyline', '多段线', 'L'), t('circle', '圆', 'Lf'), t('rect', '矩形', 'Lf')],
      [
        t('arc', '圆弧', 'f'),
        t('spline', '样条曲线', 'f'),
        t('multiline', '多线', 'fn'),
        t('ray', '构造线', 'f'),
        t('ellipse', '椭圆', 'f'),
        t('cloud', '修订云线', 'fn'),
        t('points', '点', 'f'),
        t('breakLine', '折断线'),
      ],
    ],
  },
  {
    title: '填充',
    rows: [
      [
        t('hatch', '图案填充', 'L'),
        t('hatchImage', '图像填充', 'Lf'),
        t('gradient', '渐变色', 'L'),
        t('boundary', '边界'),
        t('wipeout', '区域覆盖'),
        t('region', '面域'),
      ],
    ],
  },
  {
    title: '图块',
    rows: [
      [t('blockNew', '创建块', 'L'), t('blockInsert', '插入块', 'L'), t('blockEdit', '编辑块', 'L'), t('tagEdit', '编辑属性', 'Lf')],
      [
        t('tag', '定义属性'),
        t('blockAttr', '块属性管理器'),
        t('blockSave', '写块'),
        t('blockDynamic', '动态块', 'n'),
        t('rectAdd', '添加'),
        t('tagSync', '同步属性'),
        t('tagSelect', '选择属性'),
        t('blockReplace', '替换块'),
      ],
    ],
  },
  {
    title: '修改',
    rows: [
      [
        t('move', '移动', 'L'),
        t('copy', '复制'),
        t('rotate', '旋转'),
        t('trim', '修剪', 'Lf'),
        t('fillet', '圆角', 'f'),
        t('array', '阵列', 'f'),
        t('mirror', '镜像'),
        t('gripEdit', '夹点编辑'),
        t('offset', '偏移'),
        t('solid', '三维'),
      ],
      [
        t('stretch', '拉伸'),
        t('cubeCopy', '复制实体'),
        t('scale', '缩放'),
        t('breakAt', '打断', 'f'),
        t('join', '合并'),
        t('overlap', '绘图次序'),
        t('blockCopy', '复制块'),
        t('broom', '清理'),
      ],
    ],
  },
  {
    title: '文字',
    rows: [
      [
        t('text', '多行文字', 'L'),
        t('textStyle', '文字样式', 'L'),
        t('textSingle', '单行文字'),
        t('spell', '拼写检查'),
        t('textField', '字段'),
        t('pdfText', 'PDF 文字'),
        t('textConvert', '转换文字'),
        t('findText', '查找'),
        t('textUpdate', '更新字段'),
        t('pdfSettings', 'PDF 识别设置'),
      ],
    ],
  },
  {
    title: '标注',
    rows: [
      [
        t('dim', '标注', 'L'),
        t('dimStyle', '标注样式', 'L'),
        t('dimLinear', '线性', 'f'),
        t('centerMark', '圆心标记', 'fn'),
        t('ordinate', '坐标'),
        t('dimSpace', '调整间距'),
        t('dimContinue', '连续', 'fn'),
        t('tolerance', '公差'),
        t('dimInspect', '检验'),
        t('dimAligned', '对齐', 'f'),
      ],
    ],
  },
  {
    title: '引线',
    rows: [
      [
        t('leader', '多重引线', 'Ln'),
        t('leaderStyle', '多重引线样式', 'L'),
        t('leaderAdd', '添加引线'),
        t('leaderAlign', '对齐引线'),
        t('leaderQuick', '快速引线'),
        { icon: '', label: '' },
        t('leaderRemove', '删除引线'),
        t('leaderCollect', '合并引线'),
      ],
    ],
  },
  { title: '表格', rows: [] },
]

const toolbar: Tool[][] = [
  [t('newFile', '新建'), t('open', '打开'), t('save', '保存'), t('saveAs', '另存为')],
  [t('undo', '放弃'), t('redo', '重做')],
  [t('print', '打印'), t('printOut', '发布'), t('plotSettings', '页面设置'), t('plotEdit', '打印样式')],
  [t('importFile', '输入'), t('exportFile', '输出'), t('attach', '附着'), t('saveWeb', '保存到云')],
  [t('zoomWindow', '窗口缩放'), t('pan', '平移'), t('orbit', '动态观察')],
  [
    t('calcBrush', '特性匹配'),
    t('quickSelect', '快速选择'),
    t('match', '选择类似对象'),
    t('convert', '转换'),
    t('purge', '清理'),
    t('count', '计数'),
  ],
  [t('compare', '比较'), t('send', '共享'), t('trace', '跟踪'), t('assist', '助手', 'n')],
  [t('clipboard', '活动见解', 'n')],
]

const layerTools = [
  ['layerWalk', '图层漫游'],
  ['layerMatch', '匹配图层'],
  ['layerPrev', '上一个'],
  ['layerIso', '隔离'],
  ['layerUniso', '取消隔离'],
  ['layerFreeze', '冻结'],
  ['layerOff', '关闭'],
  ['layerLock', '锁定'],
  ['layerUnlock', '解锁'],
]

const statusTools: [string, string, boolean][] = [
  ['grid', '栅格', true],
  ['snap', '捕捉', false],
  ['ortho', '正交', false],
  ['polar', '极轴追踪', true],
  ['dynInput', '动态输入', true],
  ['lineweight', '线宽', false],
  ['transparency', '透明度', true],
  ['cycle', '选择循环', true],
  ['osnapTrack', '对象捕捉追踪', true],
  ['osnap', '对象捕捉', true],
  ['annoVisible', '注释可见性', true],
  ['annoAuto', '自动缩放', false],
]

type Prop = { label: string; value: string; kind?: 'input' | 'disabled' | 'color' | 'linetype' | 'alpha' | 'height' }

const props: Prop[] = [
  { label: '颜色', value: 'ByLayer', kind: 'color' },
  { label: '图层', value: '0' },
  { label: '线型', value: 'ByLa...', kind: 'linetype' },
  { label: '线型比例', value: '1', kind: 'input' },
  { label: '线宽', value: 'ByLayer' },
  { label: '透明度', value: '0', kind: 'alpha' },
  { label: '文字样式', value: 'Standard' },
  { label: '标注样式', value: 'ISO-25' },
  { label: '多重引线样式', value: 'Standard' },
  { label: '表格样式', value: 'Standard' },
  { label: '注释比例', value: '1:1' },
  { label: '文字高度', value: '2.5', kind: 'height' },
  { label: '打印样式', value: 'ByColor' },
  { label: '打印样式表', value: '无' },
  { label: '打印样式附着到', value: '模型', kind: 'disabled' },
  { label: '打印表类型', value: '不可用', kind: 'disabled' },
]

function Wallpaper() {
  return (
    <svg className="absolute inset-0 h-full w-full" viewBox="0 0 2662 1496" preserveAspectRatio="none" aria-hidden="true">
      <defs>
        <linearGradient id="wall-left" x1="0" y1="0" x2="0" y2="1">
          <stop offset="0" stopColor="#b9c4dc" />
          <stop offset=".1" stopColor="#b6b9c4" />
          <stop offset=".3" stopColor="#c4bea6" />
          <stop offset=".45" stopColor="#b3b6a4" />
          <stop offset=".58" stopColor="#5d9db0" />
          <stop offset=".72" stopColor="#5c8fbb" />
          <stop offset=".8" stopColor="#a9b0b8" />
          <stop offset=".83" stopColor="#4c74bd" />
          <stop offset=".95" stopColor="#4267b4" />
          <stop offset="1" stopColor="#7c98cc" />
        </linearGradient>
        <linearGradient id="wall-right" x1="0" y1="0" x2="0" y2="1">
          <stop offset="0" stopColor="#b3c4dd" />
          <stop offset=".12" stopColor="#b1b4be" />
          <stop offset=".2" stopColor="#b4b4b4" />
          <stop offset=".31" stopColor="#b8b2a2" />
          <stop offset=".35" stopColor="#9aa6b8" />
          <stop offset=".43" stopColor="#4f8fd0" />
          <stop offset=".5" stopColor="#3b74d2" />
          <stop offset=".6" stopColor="#4272cc" />
          <stop offset=".7" stopColor="#3b62bd" />
          <stop offset=".74" stopColor="#5c8fcb" />
          <stop offset=".88" stopColor="#547fce" />
          <stop offset="1" stopColor="#a3bccf" />
        </linearGradient>
        <linearGradient id="wall-bottom">
          <stop offset="0" stopColor="#7f9bcd" />
          <stop offset=".08" stopColor="#4766ab" />
          <stop offset=".2" stopColor="#4b73b2" />
          <stop offset=".45" stopColor="#5181b3" />
          <stop offset=".65" stopColor="#4f7db5" />
          <stop offset=".88" stopColor="#3a5fae" />
          <stop offset=".95" stopColor="#4a6cae" />
          <stop offset="1" stopColor="#a3bccf" />
        </linearGradient>
        <linearGradient id="wall-top">
          <stop offset="0" stopColor="#b9c4dc" />
          <stop offset=".5" stopColor="#b4c1dc" />
          <stop offset="1" stopColor="#b3c4dd" />
        </linearGradient>
      </defs>
      <rect width="1331" height="1496" fill="url(#wall-left)" />
      <rect x="1331" width="1331" height="1496" fill="url(#wall-right)" />
      <rect width="2662" height="40" fill="url(#wall-top)" />
      <rect x="30" y="1440" width="2602" height="56" fill="url(#wall-bottom)" />
      <path d="M880 1456Q1300 1520 1720 1456" fill="none" stroke="#a3a8b4" strokeWidth="14" />
      <path d="M2620 1106L2670 1078" stroke="#a9b3d0" strokeWidth="8" />
    </svg>
  )
}

function ToolButton({ tool }: { tool: Tool }) {
  if (!tool.icon) return <span />
  return (
    <button
      type="button"
      aria-label={tool.label}
      className={`relative flex items-center justify-center ${tool.big ? 'col-span-2 row-span-2' : ''}`}
    >
      <Icon name={tool.icon} big={tool.big} />
      {tool.fly && (
        <svg viewBox="0 0 8 8" className={`absolute size-2 ${tool.big ? 'right-0.5 bottom-0.5' : 'right-0 bottom-0'}`}>
          <path d="M8 0V8H0Z" fill="#9b9ea5" />
        </svg>
      )}
      {tool.badge && <Badge className="top-0 right-0" />}
    </button>
  )
}

function ToolPanel() {
  return (
    <aside className="flex w-[368px] shrink-0 flex-col">
      <div role="tablist" className="flex h-[46px] shrink-0 text-2xl leading-none">
        <button role="tab" aria-selected="true" className="w-[160px] pt-1.5 pr-1 font-medium text-white">
          绘图
        </button>
        <button role="tab" className="flex-1 border-x-2 border-b-2 border-[#272b34] bg-[#30343f] pt-1.5 font-medium text-[#a2a5ab]">
          建模
        </button>
        <button aria-label="收起" className="flex w-[46px] items-center justify-center border-b-2 border-[#272b34]">
          <svg viewBox="0 0 14 12" className="h-3 w-3.5" fill="none" stroke="#b4b6bb" strokeWidth="1.5">
            <path d="M6 0L1 6L6 12M13 0L8 6L13 12" />
          </svg>
        </button>
      </div>
      <div className="flex min-h-0 flex-1 flex-col overflow-hidden px-2">
        {sections.map((s, n) => (
          <section key={s.title} className="shrink-0 border-b-2 border-[#282c36]">
            <header className={`flex items-center pt-1.5 ${n === 0 ? 'h-10' : 'h-[42px]'}`}>
              <button type="button" className="flex flex-1 items-center gap-2 text-xl leading-none font-medium text-[#f0f0f2]">
                <Caret className="h-2 w-[18px] text-white" />
                {s.title}
              </button>
              <button type="button" aria-label={`${s.title}设置`} className="mr-[3px] text-[#f4f4f4]">
                <Gear className="size-[18px]" />
              </button>
            </header>
            <div className="flex flex-col gap-1 pb-3">
              {s.rows.map((row, i) => (
                <div key={i} className="grid auto-rows-[44px] grid-cols-8">
                  {row.map((tool, j) => (
                    <ToolButton key={tool.icon || j} tool={tool} />
                  ))}
                </div>
              ))}
            </div>
          </section>
        ))}
      </div>
      <div className="flex h-[46px] shrink-0 items-center gap-8 pt-1 pl-[31px]">
        <button type="button" aria-label="添加面板">
          <Plus />
        </button>
        <button type="button" aria-label="面板列表">
          <Icon name="menuList" />
        </button>
      </div>
    </aside>
  )
}

const STEP = 24.83

function Grid() {
  const vs = Array.from({ length: 140 }, (_, i) => i)
  const pos = (offset: number, i: number) => Math.round(offset + (i - 5) * STEP)
  return (
    <svg className="absolute inset-0 h-full w-full" shapeRendering="crispEdges" aria-hidden="true">
      {vs.map((i) => (
        <g key={i}>
          {i % 5 !== 0 && (
            <>
              <rect x={pos(58, i)} width="2" height="100%" fill="#262b33" />
              <rect y={pos(86, i)} width="100%" height="2" fill="#262b33" />
            </>
          )}
        </g>
      ))}
      {vs.filter((i) => i % 5 === 0).map((i) => (
        <g key={i}>
          <rect x={pos(57, i)} width="2" height="100%" fill="#2e3341" />
          <rect y={pos(85, i)} width="100%" height="2" fill="#2e323c" />
        </g>
      ))}
    </svg>
  )
}

function ViewCube() {
  return (
    <div className="absolute top-5 right-6 flex w-[240px] flex-col items-center gap-[33px]">
      <svg viewBox="0 0 240 242" className="h-[242px] w-[240px]" fontFamily="'Noto Sans CJK SC', sans-serif">
        <circle cx="120" cy="121" r="93" fill="none" stroke="#494c53" strokeWidth="25" />
        <g fill="#b8b8ba" fontSize="32" textAnchor="middle">
          <text x="120" y="37">北</text>
          <text x="120" y="234">南</text>
          <text x="22" y="135">西</text>
          <text x="217" y="135">东</text>
        </g>
        <rect x="75" y="77" width="90" height="90" fill="#afb0b1" stroke="#8f9194" />
        <rect x="92" y="94" width="56" height="56" fill="#a3a7ad" />
        <text x="120" y="141" fontSize="54" fontWeight="300" fill="#505359" textAnchor="middle">上</text>
      </svg>
      <button
        type="button"
        className="flex h-6 w-[100px] items-center justify-between rounded-md bg-[#6b7178] px-2 text-xl leading-none font-semibold text-[#23282f]"
      >
        WCS
        <svg viewBox="0 0 18 11" className="h-[11px] w-[18px]" fill="#8f959d" stroke="#23282f" strokeWidth="2">
          <path d="M1 1H17L9 10Z" />
        </svg>
      </button>
    </div>
  )
}

function Canvas() {
  return (
    <main className="relative flex min-w-0 flex-1 flex-col justify-between overflow-hidden bg-[#22272e]">
      <Grid />
      <nav className="relative flex h-12 items-center pl-7 text-[22px] leading-none text-[#a2a4a6]">
        <button type="button" aria-label="视口">
          <svg viewBox="0 0 16 16" className="size-4" stroke="currentColor" strokeWidth="2">
            <path d="M8 2V14M2 8H14" />
          </svg>
        </button>
        <button type="button" className="ml-6 flex h-[30px] items-center border-l-2 border-[#8b8d90] pl-2.5">
          俯视
        </button>
        <button type="button" className="ml-4 flex h-[30px] items-center border-l-2 border-[#8b8d90] pl-2.5">
          二维线框
        </button>
      </nav>

      {/* cursor */}
      <svg viewBox="0 0 258 258" className="absolute top-[436px] left-[743px] size-[258px]" stroke="#e6e6e6" strokeWidth="2" fill="none">
        <path d="M129 0V122M129 136V258M0 129H122M136 129H258" />
        <rect x="123" y="123" width="12" height="12" />
      </svg>

      {/* UCS icon */}
      <svg viewBox="0 0 160 160" className="absolute bottom-4 left-5 size-40" stroke="#dcdedf" strokeWidth="2" fill="none">
        <path d="M13 43V143H114M4 133H23V152H4Z" />
        <g fill="#dcdedf" stroke="none" fontFamily="Inter, sans-serif" fontWeight="300" fontSize="36" textAnchor="middle">
          <text x="29" y="34">Y</text>
          <text x="135" y="139">X</text>
        </g>
      </svg>

      <ViewCube />

      <form
        className="relative mx-auto flex h-[50px] w-[1000px] max-w-full items-center bg-[#3d4352] pr-[18px] pl-4 text-[22px] text-[#9da0a8]"
        onSubmit={(e) => e.preventDefault()}
      >
        <button type="button" aria-label="最近的命令" className="flex items-center gap-1.5 font-medium">
          &gt;_
          <Caret className="h-2 w-3 text-[#a4a7ad]" />
        </button>
        <input
          aria-label="命令"
          placeholder="键入命令"
          className="ml-8 min-w-0 flex-1 bg-transparent placeholder:text-[#9da0a8]"
        />
        <button type="button" aria-label="历史记录" className="mr-6">
          <Caret className="h-2 w-3 rotate-180 text-[#9da0a8]" />
        </button>
        <button type="button" aria-label="输入设置">
          <Icon name="share" />
        </button>
      </form>
    </main>
  )
}

const field = 'rounded-sm border-2 border-[#333d42] bg-[#50596d] text-white'

function Select({ id, label, value, className, pad = 'pl-3' }: { id?: string; label?: string; value: string; className: string; pad?: string }) {
  return (
    <div className="relative min-w-0 flex-1">
      <select id={id} aria-label={label} className={`w-full appearance-none ${pad} ${className}`}>
        <option>{value}</option>
      </select>
      <Caret className="pointer-events-none absolute top-1/2 right-2 -mt-1 h-2 w-3 text-[#dadada]" />
    </div>
  )
}

function PropertyRow({ prop, id }: { prop: Prop; id: string }) {
  const { kind, label, value } = prop
  return (
    <div className="flex h-[46px] items-center gap-5">
      <label htmlFor={id} className="w-[143px] text-right whitespace-nowrap text-[#d2d4d8]">
        {label}
      </label>
      <div className="relative flex w-[216px] items-center gap-1.5">
        {(!kind || kind === 'color' || kind === 'linetype') && (
          <Select
            id={id}
            value={value}
            className={`h-[38px] font-medium ${field}`}
            pad={kind === 'color' ? 'pl-[55px]' : kind === 'linetype' ? 'pl-[106px]' : 'pl-3'}
          />
        )}
        {kind === 'color' && <span className="pointer-events-none absolute left-[19px] size-[18px] border-2 border-black bg-white" />}
        {kind === 'linetype' && <span className="pointer-events-none absolute left-4 h-0.5 w-16 bg-white" />}
        {(kind === 'input' || kind === 'height') && (
          <input id={id} defaultValue={value} className={`h-[38px] w-full min-w-0 px-1.5 font-medium ${field}`} />
        )}
        {kind === 'disabled' && (
          <input
            id={id}
            disabled
            defaultValue={value}
            className="h-9 w-full rounded-sm border-2 border-[#414757] bg-[#454b5c] px-1 text-[#7d828f]"
          />
        )}
        {kind === 'height' && (
          <button type="button" aria-label="拾取高度" className="flex h-9 w-10 shrink-0 items-center justify-center rounded-sm border-2 border-[#373e49]">
            <Icon name="pickHeight" />
          </button>
        )}
        {kind === 'alpha' && (
          <>
            <input
              id={id}
              defaultValue={value}
              className="ml-1 h-[34px] w-[128px] border-2 border-[#333d42] bg-[#50596d] px-1.5 text-right font-medium text-white"
            />
            <svg viewBox="0 0 64 28" className="pointer-events-none absolute left-1.5 h-7 w-16" aria-hidden="true">
              <path d="M0 0H3V3L0 6ZM0 28H3V25L0 22Z" fill="#7fa8f0" />
              <path d="M59 14V26" stroke="#9a9fab" />
            </svg>
            <button
              type="button"
              aria-label="图层透明度"
              className={`flex h-[38px] flex-1 items-center justify-between pr-1.5 pl-3 ${field}`}
            >
              <svg viewBox="0 0 32 28" className="h-6 w-7">
                <path d="M10 1H31L22 11H2Z" fill={B} />
                <path d="M1 18L4 14H22L31 5V9L22 18ZM1 25L4 21H22L31 12V16L22 25Z" fill={G} />
              </svg>
              <Caret />
            </button>
          </>
        )}
      </div>
    </div>
  )
}

function Inspector() {
  return (
    <aside className="flex w-[472px] shrink-0 flex-col text-[22px] leading-none">
      <div role="tablist" className="flex h-[46px] shrink-0">
        {['layersInfo', 'clip', 'calcPanel', ''].map((icon, i) => (
          <button
            key={icon}
            role="tab"
            aria-selected={i === 0}
            aria-label={['图层', '参照', '计算器', '空'][i]}
            className={`flex items-center justify-center ${i === 3 ? 'flex-1' : 'w-[104px]'} ${i ? 'border-b-2 border-l-2 border-[#272b34] bg-[#30343f]' : ''}`}
          >
            {icon && <Icon name={icon} />}
          </button>
        ))}
        <button aria-label="收起" className="flex w-[50px] items-center justify-center border-b-2 border-l-2 border-[#272b34]">
          <svg viewBox="0 0 14 12" className="h-3 w-3.5" fill="none" stroke="#b4b6bb" strokeWidth="1.5">
            <path d="M1 0L6 6L1 12M8 0L13 6L8 12" />
          </svg>
        </button>
      </div>

      <section className="flex h-[300px] shrink-0 flex-col border-b-2 border-[#282c36] pr-4 pl-5">
        <header className="flex h-8 items-center justify-between pr-1.5">
          <h2 className="text-2xl leading-none font-medium text-[#dcdde0]">图层</h2>
          <button type="button" aria-label="停靠">
            <Icon name="dock" />
          </button>
        </header>
        <div className="mt-[25px] grid h-12 grid-cols-9 pr-1">
          {layerTools.map(([icon, label]) => (
            <button key={icon} type="button" aria-label={label} className="flex items-center justify-center">
              <Icon name={icon} />
            </button>
          ))}
        </div>
        <div className="relative mt-3.5 flex h-[52px]">
          <Select label="当前图层" value="0" pad="pl-[160px]" className={`h-[52px] font-medium ${field}`} />
          <div className="pointer-events-none absolute top-[17px] left-5 flex items-center gap-4">
            <span className="size-4 rounded-full bg-[#dadada]" />
            <svg viewBox="0 0 18 20" className="h-5 w-[18px]" fill="none" stroke="#6c7281" strokeWidth="2">
              <path d="M5 10V5Q5 1 9 1Q13 1 13 5V10" />
              <path d="M2 9H16V20H2Z" fill="#6c7281" stroke="none" />
            </svg>
            <svg viewBox="0 0 18 18" className="size-[18px]" fill="none" stroke="#6c7281" strokeWidth="1.5">
              <path d="M9 0V18M0 9H18M3 3L15 15M15 3L3 15" />
              <circle cx="9" cy="9" r="5" />
            </svg>
            <span className="size-[18px] border-2 border-black bg-white" />
          </div>
        </div>
        <div className="mt-1 flex px-px">
          <Select label="图层状态" value="未保存的图层状态" className={`h-[52px] font-medium ${field}`} />
        </div>
        <button type="button" className="mt-3 flex h-7 items-center gap-6 pl-3 text-[#c5c7cc]">
          <svg viewBox="0 0 12 18" className="h-[18px] w-3" fill="none" stroke="#d2d2d4" strokeWidth="2">
            <path d="M2 1L10 9L2 17" />
          </svg>
          显示图层列表
        </button>
      </section>

      <section className="flex min-h-0 flex-1 flex-col overflow-hidden pr-5 pl-5">
        <header className="flex h-8 shrink-0 items-center">
          <h2 className="flex-1 text-2xl leading-none font-medium text-[#dcdde0]">特性</h2>
          <div className="flex h-7 w-[120px] border-2 border-[#2d323d] text-base leading-none">
            <button type="button" className="flex-1 text-[#83878f]">
              全部
            </button>
            <button type="button" className="w-[62px] border-l-2 border-[#2d323d] bg-[#50596d] font-medium text-white">
              我的
            </button>
          </div>
          <button type="button" aria-label="编辑特性" className="ml-[18px]">
            <Icon name="noteEdit" />
          </button>
          <button type="button" aria-label="停靠" className="ml-2.5">
            <Icon name="dock" />
          </button>
        </header>
        <div className="relative mt-[15px] mb-2 flex px-px">
          <select
            aria-label="空间"
            disabled
            className="h-[42px] w-full appearance-none rounded-sm border-2 border-[#414757] bg-[#454b5c] pl-3 text-[#7d828f] opacity-100"
          >
            <option>模型空间</option>
          </select>
          <Caret className="pointer-events-none absolute top-[17px] right-2.5 h-2 w-3 text-[#7d828f]" />
        </div>
        <div className="flex flex-col items-end pr-2">
          {props.map((p, i) => (
            <PropertyRow key={p.label} prop={p} id={`prop-${i}`} />
          ))}
        </div>
      </section>
    </aside>
  )
}

function StatusBar() {
  return (
    <footer className="flex h-[46px] shrink-0 border-t-2 border-[#22262e] text-[22px] leading-none text-[#a9abb1]">
      <button type="button" className="ml-0.5 w-[118px] bg-[#4f586c] pr-1.5 font-bold text-white">
        模型
      </button>
      <button type="button" aria-label="新建布局" className="flex w-[48px] items-center justify-center border-x-2 border-[#282c36]">
        <Plus />
      </button>
      <button type="button" className="w-[118px] border-r-2 border-[#282c36] pr-1.5">
        布局1
      </button>
      <button type="button" className="w-[118px] border-r-2 border-[#282c36] pr-1.5">
        布局2
      </button>
      <div className="ml-auto flex items-center border-l-2 border-[#282c36] pr-4 pl-3.5">
        <output className="w-[328px] text-[23px] whitespace-nowrap text-[#b4b6bb]">2888.8868, 1533.1858, 0.0000</output>
        <div className="ml-1 flex gap-1">
          {statusTools.map(([icon, label, on]) => (
            <button
              key={icon}
              type="button"
              aria-label={label}
              aria-pressed={on}
              className={`flex size-10 items-center justify-center ${on ? 'bg-[#6f90c0]' : ''}`}
            >
              <Icon name={icon} />
            </button>
          ))}
          <button type="button" className="flex h-10 items-center gap-1 px-1 text-[#a9abb1]">
            <Icon name="annoScale" />
            1:1
            <Caret className="ml-1 h-2 w-3 text-[#dadada]" />
          </button>
        </div>
        <button type="button" aria-label="工作空间" className="ml-3.5">
          <Icon name="shapes" />
        </button>
        <button type="button" aria-label="设置" className="ml-3 text-[#dadada]">
          <Gear className="size-8" />
        </button>
      </div>
    </footer>
  )
}

export default function App() {
  return (
    <div className="relative flex h-screen w-full pt-[33px] pr-[34px] pb-[34px] pl-8 font-['Inter','Noto_Sans_CJK_SC',sans-serif]">
      <Wallpaper />
      <div className="relative flex min-w-0 flex-1 flex-col overflow-hidden rounded-[26px] bg-[#3d4452] shadow-[0_0_2px_1px_rgba(70,75,88,0.9),0_12px_36px_rgba(20,24,40,0.35)]">
        <div className="relative flex h-[112px] shrink-0 flex-col border-b-2 border-[#2c303b]">
          <div className="grid h-[46px] grid-cols-[1fr_auto_1fr] items-start">
            <div className="flex gap-4 pt-[15px] pl-4">
              <button aria-label="关闭" className="size-6 rounded-full bg-[#e56f5e]" />
              <button aria-label="最小化" className="size-6 rounded-full bg-[#f0bf4f]" />
              <button aria-label="缩放" className="size-6 rounded-full bg-[#76c454]" />
            </div>
            <h1 className="flex gap-7 pt-[13px] text-[26px] leading-none font-bold text-[#a9acb3]">
              <span>Autodesk AutoCAD 2026</span>
              <span>Drawing1.dwg</span>
            </h1>
            <button
              type="button"
              className="ml-auto flex h-[43px] w-[240px] items-center gap-2.5 border-b-2 border-l-2 border-[#2c303b] bg-[#4f586c] pr-2.5 pl-3 text-2xl leading-none font-medium text-white"
            >
              <svg viewBox="0 0 24 28" className="h-7 w-6" fill="none" stroke={G} strokeWidth="2">
                <circle cx="12" cy="7" r="5" />
                <path d="M1 27Q2 15 12 15Q22 15 23 27" />
              </svg>
              登录
              <Caret className="ml-auto h-2 w-3 text-[#dadada]" />
            </button>
          </div>
          <div className="flex justify-center gap-[46px] pt-1">
            {toolbar.map((group) => (
              <div key={group[0].icon} className="flex">
                {group.map((tool) => (
                  <button
                    key={tool.icon}
                    type="button"
                    aria-label={tool.label}
                    className="relative flex h-14 w-[66px] items-center justify-center"
                  >
                    <Icon name={tool.icon} />
                    {tool.badge && <Badge className="top-2 right-0.5" />}
                  </button>
                ))}
              </div>
            ))}
          </div>
        </div>

        <nav className="flex h-[47px] shrink-0 border-b-2 border-[#22262e] pl-0.5 text-[22px] leading-none">
          <button type="button" aria-label="开始页" className="flex w-[47px] items-center justify-center border-r-2 border-[#282c36]">
            <svg viewBox="0 0 28 28" className="size-7">
              <path d="M0 0H14V14H0Z" fill={B} />
              <path d="M16 2H28V14H16ZM2 16H14V28H2ZM16 16H28V28H16Z" fill={G} />
            </svg>
          </button>
          <button type="button" aria-label="新建" className="flex w-[46px] items-center justify-center border-r-2 border-[#282c36]">
            <Plus />
          </button>
          <button type="button" className="w-[261px] border-r-2 border-[#282c36] pl-2.5 text-left text-[#a2a5ad]">
            开始
          </button>
          <button type="button" className="w-[258px] border-r-2 border-[#282c36] bg-[#4f586c] pl-1.5 text-left font-medium text-white">
            Drawing1
          </button>
        </nav>

        <div className="flex min-h-0 flex-1">
          <ToolPanel />
          <div className="flex min-w-0 flex-1 flex-col">
            <div className="flex min-h-0 flex-1">
              <Canvas />
              <Inspector />
            </div>
            <StatusBar />
          </div>
        </div>
      </div>
    </div>
  )
}
